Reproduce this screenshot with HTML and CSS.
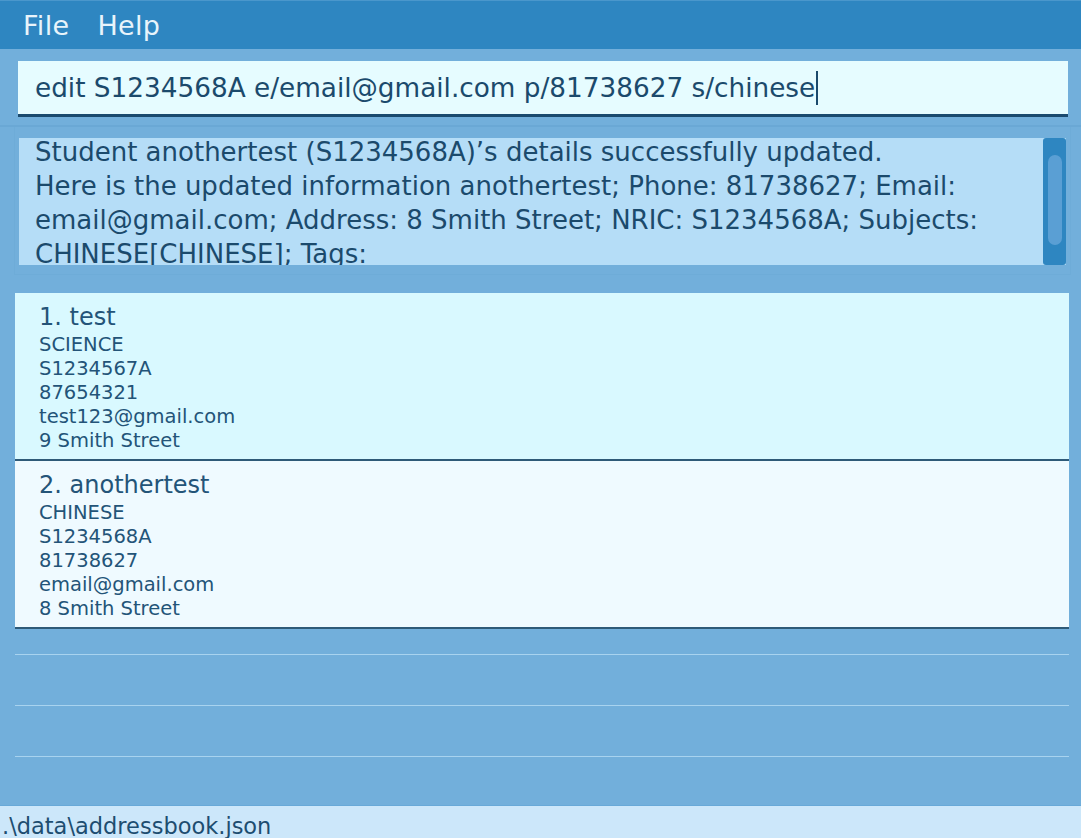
FILE: index.html
```html
<!DOCTYPE html>
<html>
<head>
<meta charset="utf-8">
<link rel="stylesheet" href="styles.css">
</head>
<body>
<div class="app">
  <div class="menubar">
    <span class="menu-item">File</span>
    <span class="menu-item">Help</span>
  </div>
  <div class="command-wrap">
    <div class="command-box"><span>edit S1234568A e/email@gmail.com p/81738627 s/chinese</span><span class="caret"></span></div>
  </div>
  <div class="result-panel">
    <div class="result-box">
      <div class="result-text">Student anothertest (S1234568A)’s details successfully updated.<br>Here is the updated information anothertest; Phone: 81738627; Email: email@gmail.com; Address: 8 Smith Street; NRIC: S1234568A; Subjects: CHINESE[CHINESE]; Tags:</div>
      <div class="scrollbar"><div class="thumb"></div></div>
    </div>
  </div>
  <div class="list">
    <div class="card card-odd">
      <div class="name">1. test</div>
      <div class="field">SCIENCE</div>
      <div class="field">S1234567A</div>
      <div class="field">87654321</div>
      <div class="field">test123@gmail.com</div>
      <div class="field">9 Smith Street</div>
    </div>
    <div class="card card-even">
      <div class="name">2. anothertest</div>
      <div class="field">CHINESE</div>
      <div class="field">S1234568A</div>
      <div class="field">81738627</div>
      <div class="field">email@gmail.com</div>
      <div class="field">8 Smith Street</div>
    </div>
    <div class="empty empty-first"></div>
    <div class="empty"></div>
    <div class="empty"></div>
  </div>
  <div class="statusbar">.\data\addressbook.json</div>
</div>
</body>
</html>
```
FILE: styles.css
```css
html, body {
  margin: 0;
  padding: 0;
}
body {
  width: 1081px;
  height: 838px;
  overflow: hidden;
  background: #72afdb;
  font-family: "DejaVu Sans", Verdana, sans-serif;
  color: #1d4d70;
}
.app {
  display: flex;
  flex-direction: column;
  height: 838px;
}
.menubar {
  height: 49px;
  background: #2e86c1;
  border-top: 1px solid #4a97cc;
  box-sizing: border-box;
  display: flex;
  align-items: center;
  padding-left: 23px;
  gap: 28px;
}
.menu-item {
  color: #e8f4fb;
  font-size: 27px;
  letter-spacing: 0.3px;
}
.command-wrap {
  padding: 12px 13px 8px 18px;
  border-bottom: 2px solid #6aa8d5;
}
.command-box {
  height: 53px;
  background: #e6fcff;
  border-bottom: 3px solid #1a4a6e;
  display: flex;
  align-items: center;
  padding-left: 17px;
  font-size: 26.3px;
  color: #1b4a6c;
  white-space: nowrap;
}
.caret {
  display: inline-block;
  width: 1.5px;
  height: 34px;
  background: #1b4a6c;
  margin-left: 1px;
}
.result-panel {
  margin: 0 10px 0 14px;
  padding: 11px 4px 7px 4px;
  border: 1px solid #6eacd8;
  border-top: none;
  height: 148px;
  box-sizing: border-box;
}
.result-box {
  height: 127px;
  background: #b5ddf7;
  display: flex;
  overflow: hidden;
}
.result-text {
  flex: 1;
  padding: 0 10px 0 16px;
  font-size: 26px;
  line-height: 34px;
  color: #1b4a6c;
  margin-top: -3px;
}
.scrollbar {
  width: 23px;
  flex: none;
  background: #2e86c1;
  border-radius: 3px;
  padding: 17px 4px 0 5px;
  box-sizing: border-box;
}
.thumb {
  height: 90px;
  background: #5a9fd4;
  border-radius: 7px;
}
.list {
  flex: 1;
  margin: 18px 12px 0 15px;
}
.card {
  height: 168px;
  box-sizing: border-box;
  border-bottom: 2px solid #2e5a78;
  padding: 9px 0 0 24px;
  color: #235478;
}
.card-odd {
  background: #d9f9ff;
}
.card-even {
  background: #effaff;
}
.name {
  font-size: 24px;
  line-height: 30px;
  margin-bottom: 1px;
}
.field {
  font-size: 19.5px;
  line-height: 24px;
}
.empty {
  height: 50px;
  border-bottom: 1px solid #a8d3ef;
}
.empty-first {
  height: 25px;
}
.statusbar {
  height: 33px;
  background: #cce7fa;
  border-top: 1px solid #68a9d8;
  box-sizing: border-box;
  padding-left: 2px;
  font-size: 22.5px;
  line-height: 40px;
  color: #1d4d70;
  overflow: hidden;
}
```
